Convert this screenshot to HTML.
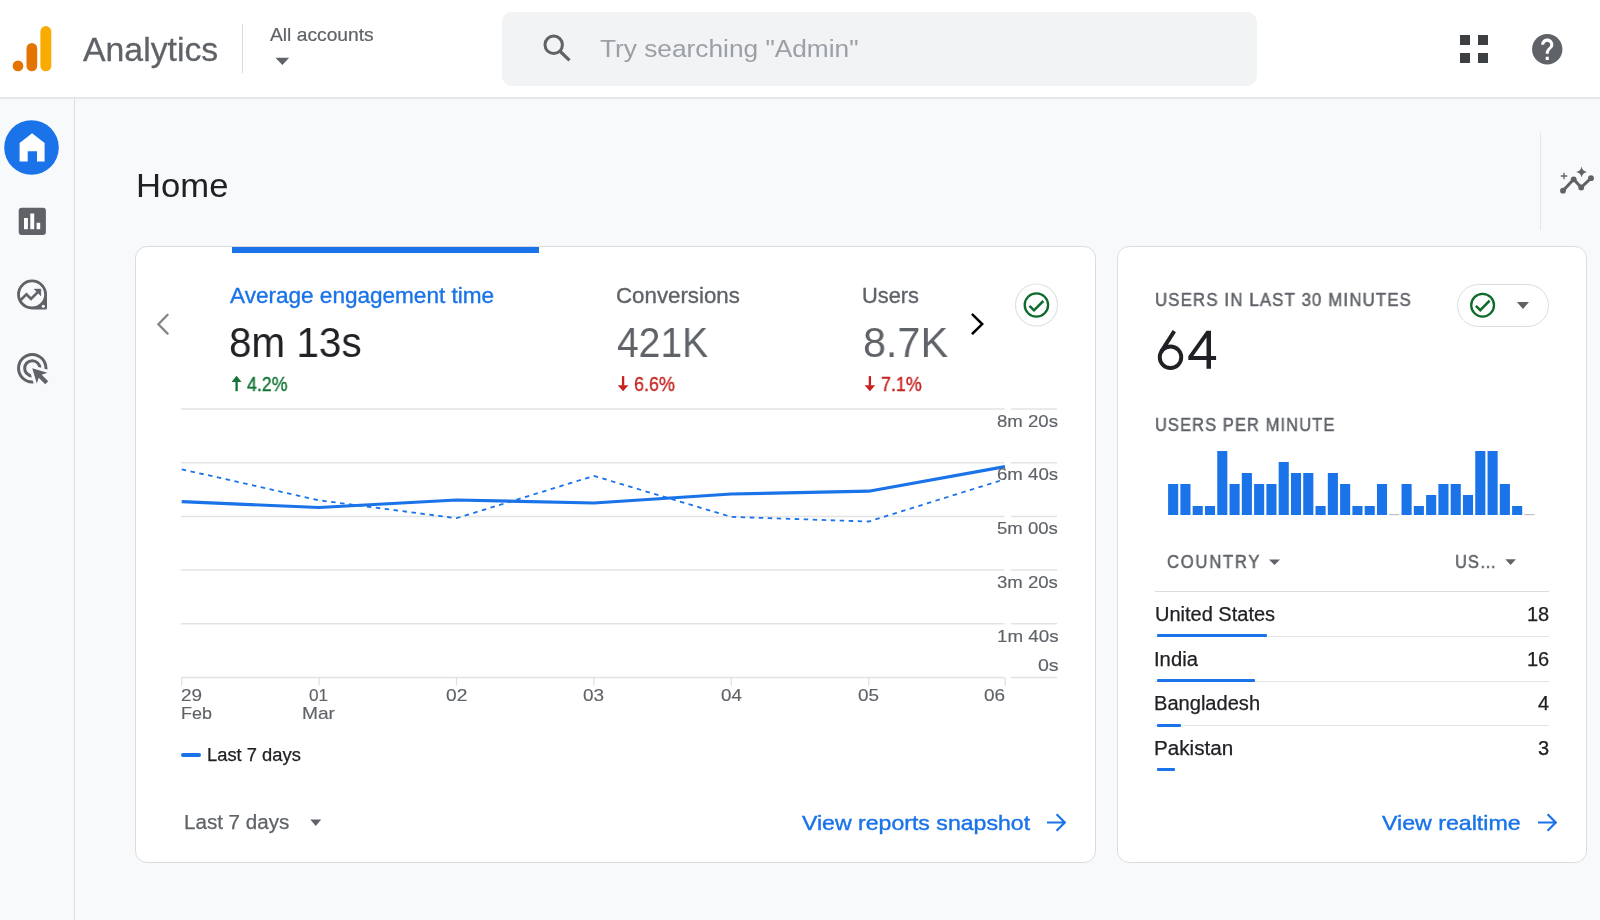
<!DOCTYPE html>
<html><head><meta charset="utf-8"><title>Analytics Home</title>
<style>
html,body{margin:0;padding:0;}
body{width:1600px;height:920px;overflow:hidden;position:relative;background:#f8f9fa;font-family:"Liberation Sans",sans-serif;}
.t{position:absolute;white-space:nowrap;transform-origin:0 50%;will-change:transform;}
.r{position:absolute;}
</style></head><body>
<div class="r" style="left:0px;top:0px;width:1600px;height:97px;background:#fff;"></div>
<div class="r" style="left:0px;top:97px;width:1600px;height:2px;background:#e6e7e9;"></div>
<svg class="r" style="left:0;top:0" width="80" height="97" viewBox="0 0 80 97"><rect x="40.4" y="26.1" width="10.9" height="45.2" rx="5.45" fill="#F9AB00"/><rect x="26.5" y="43" width="10.7" height="28.3" rx="5.35" fill="#E37400"/><circle cx="18" cy="65.9" r="5.35" fill="#E37400"/></svg>
<div class="t" style="left:83.00px;top:31px;font-size:33.5px;line-height:37px;color:#5f6368;transform:scaleX(1.0088);-webkit-text-stroke:0.3px #5f6368;">Analytics</div>
<div class="r" style="left:242px;top:24px;width:1px;height:49px;background:#dadce0;"></div>
<div class="t" style="left:269.50px;top:24px;font-size:19px;line-height:21px;color:#5f6368;transform:scaleX(1.0123);-webkit-text-stroke:0.2px #5f6368;">All accounts</div>
<svg class="r" style="left:275px;top:57px" width="15" height="9" viewBox="0 0 15 9"><path d="M0.5 0.8h13.7L7.35 8z" fill="#5f6368"/></svg>
<div class="r" style="left:502px;top:12px;width:755px;height:74px;background:#f1f3f4;border-radius:10px;"></div>
<svg class="r" style="left:538px;top:30px" width="38" height="38" viewBox="0 0 38 38"><circle cx="15.7" cy="14.8" r="8.7" fill="none" stroke="#5f6368" stroke-width="3"/><path d="M21.8 21 L31.5 30.4" stroke="#5f6368" stroke-width="3.2"/></svg>
<div class="t" style="left:600.47px;top:35px;font-size:24.8px;line-height:27px;color:#9aa0a6;transform:scaleX(1.0591);">Try searching "Admin"</div>
<div class="r" style="left:1460px;top:35px;width:10px;height:10px;background:#3c4043;"></div>
<div class="r" style="left:1460px;top:52.6px;width:10px;height:10px;background:#3c4043;"></div>
<div class="r" style="left:1477.7px;top:35px;width:10px;height:10px;background:#3c4043;"></div>
<div class="r" style="left:1477.7px;top:52.6px;width:10px;height:10px;background:#3c4043;"></div>
<svg class="r" style="left:1529px;top:30.6px" width="36.5" height="36.5" viewBox="0 0 24 24"><path fill="#5f6368" d="M12 2C6.48 2 2 6.48 2 12s4.48 10 10 10 10-4.48 10-10S17.52 2 12 2zm1 17h-2v-2h2v2zm2.07-7.75l-.9.92C13.45 12.9 13 13.5 13 15h-2v-.5c0-1.1.45-2.1 1.17-2.83l1.24-1.26c.37-.36.59-.86.59-1.41 0-1.1-.9-2-2-2s-2 .9-2 2H8c0-2.21 1.79-4 4-4s4 1.79 4 4c0 .88-.36 1.68-.93 2.25z"/></svg>
<div class="r" style="left:74px;top:99px;width:1px;height:821px;background:#dcdee1;"></div>
<svg class="r" style="left:0;top:98px" width="74" height="300" viewBox="0 98 74 300"><circle cx="31.5" cy="147.5" r="27.3" fill="#1a73e8"/><path d="M19.6 143 L32.1 133.3 L44.6 143 V161.5 H37 V151.2 H27.7 V161.5 H19.6 Z" fill="#fff"/><rect x="18.7" y="207.7" width="27.2" height="27.3" rx="3" fill="#5f6368"/><rect x="24" y="218" width="3.9" height="11.2" fill="#fff"/><rect x="30.3" y="213.5" width="3.9" height="15.7" fill="#fff"/><rect x="36.6" y="222.8" width="3.6" height="6.4" fill="#fff"/></svg>
<svg class="r" style="left:0;top:260px" width="74" height="60" viewBox="0 260 74 60"><path fill-rule="evenodd" fill="#5f6368" d="M32.05 279.5 A14.95 14.95 0 0 0 17.1 294.45 A14.95 14.95 0 0 0 32.05 309.4 H45.5 Q47 309.4 47 307.9 V294.45 A14.95 14.95 0 0 0 32.05 279.5 Z M32.05 282.35 A12.1 12.1 0 1 0 32.05 306.55 A12.1 12.1 0 1 0 32.05 282.35 Z"/><clipPath id="exc"><circle cx="32.05" cy="294.45" r="13"/></clipPath><g clip-path="url(#exc)"><g transform="translate(15.6 282.1) scale(1.15)"><path fill="#5f6368" stroke="#5f6368" stroke-width="0.35" d="M16 6l2.29 2.29-4.88 4.88-4-4L2 16.59 3.41 18l6-6 4 4 6.3-6.29L22 12V6z"/></g></g><circle cx="43.3" cy="306.3" r="1.5" fill="#fff"/></svg>
<svg class="r" style="left:14px;top:350.2px" width="36.5" height="36.5" viewBox="0 -960 960 960"><path fill="#5f6368" d="M468-240q-96-5-162-74t-66-166q0-100 70-170t170-70q97 0 166 66t74 163l-84-25q-13-54-56-89t-100-35q-66 0-113 47t-47 113q0 57 35 100t89 56l24 84Zm48 158q-9 2-18 2h-18q-83 0-156-31.5T197-197q-54-54-85.5-127T80-480q0-83 31.5-156T197-763q54-54 127-85.5T480-880q83 0 156 31.5T763-763q54 54 85.5 127T880-480v18q0 9-2 18l-78-24v-12q0-134-93-227t-227-93q-134 0-227 93t-93 227q0 134 93 227t227 93h12l24 78Zm305 22L650-231 600-80 480-480l400 120-151 50 171 171-79 79Z"/></svg>
<div class="t" style="left:136.13px;top:166px;font-size:34px;line-height:38px;color:#202124;transform:scaleX(1.0190);">Home</div>
<div class="r" style="left:1540px;top:133px;width:1px;height:97px;background:#e3e5e8;"></div>
<svg class="r" style="left:1550px;top:160px" width="50" height="45" viewBox="1550 160 50 45"><path d="M1563 190.7 L1573.7 179.3 L1581.2 187.5 L1591 178.2" fill="none" stroke="#5f6368" stroke-width="3" stroke-linejoin="round"/><circle cx="1563" cy="190.7" r="2.9" fill="#5f6368"/><circle cx="1573.7" cy="179.3" r="2.9" fill="#5f6368"/><circle cx="1581.2" cy="187.5" r="2.9" fill="#5f6368"/><circle cx="1591" cy="178.2" r="2.9" fill="#5f6368"/><path d="M1581.6 166.5 Q1582.4 171.2 1587 172 Q1582.4 172.8 1581.6 177.5 Q1580.8 172.8 1576.2 172 Q1580.8 171.2 1581.6 166.5Z" fill="#5f6368"/><path d="M1564 172.8 V179.2 M1560.8 176 H1567.2" stroke="#5f6368" stroke-width="1.3"/></svg>
<div class="r" style="left:135px;top:246px;width:961px;height:617px;background:#fff;box-sizing:border-box;border:1px solid #dadce0;border-radius:12px;"></div>
<div class="r" style="left:231.9px;top:247px;width:307.1px;height:6px;background:#1a73e8;"></div>
<svg class="r" style="left:140px;top:300px" width="880" height="45" viewBox="140 300 880 45"><polyline points="167.6,314.8 158.4,324.2 167.6,333.6" fill="none" stroke="#80868b" stroke-width="2.3" stroke-linecap="round"/><polyline points="972.6,314.7 982.2,324.1 972.6,333.5" fill="none" stroke="#000" stroke-width="2.5" stroke-linecap="round"/></svg>
<div class="t" style="left:229.60px;top:284px;font-size:21.5px;line-height:24px;color:#1a73e8;transform:scaleX(1.0487);-webkit-text-stroke:0.35px #1a73e8;">Average engagement time</div>
<div class="t" style="left:228.68px;top:319px;font-size:42px;line-height:47px;color:#202124;transform:scaleX(0.9635);">8m 13s</div>
<div class="t" style="left:615.89px;top:284px;font-size:21.5px;line-height:24px;color:#5f6368;transform:scaleX(1.0364);-webkit-text-stroke:0.35px #5f6368;">Conversions</div>
<div class="t" style="left:617.02px;top:319px;font-size:42px;line-height:47px;color:#5f6368;transform:scaleX(0.9297);">421K</div>
<div class="t" style="left:861.86px;top:284px;font-size:21.5px;line-height:24px;color:#5f6368;transform:scaleX(1.0158);-webkit-text-stroke:0.35px #5f6368;">Users</div>
<div class="t" style="left:862.54px;top:319px;font-size:42px;line-height:47px;color:#5f6368;transform:scaleX(0.9833);">8.7K</div>
<svg class="r" style="left:0;top:0" width="1000" height="400" viewBox="0 0 1000 400"><path d="M231.6 381.9 L236.55 375.7 L241.5 381.9 Z" fill="#137333"/><rect x="235.45" y="381" width="2.3" height="10.2" fill="#137333"/><path d="M617.8 385.3 L623.1 391.2 L628.4 385.3 Z" fill="#c5221f"/><rect x="621.95" y="376.1" width="2.3" height="9.5" fill="#c5221f"/><path d="M864.6 385.3 L869.9 391.2 L875.2 385.3 Z" fill="#c5221f"/><rect x="868.75" y="376.1" width="2.3" height="9.5" fill="#c5221f"/></svg>
<div class="t" style="left:247.14px;top:374px;font-size:19.3px;line-height:21px;color:#137333;transform:scaleX(0.9222);-webkit-text-stroke:0.35px #137333;">4.2%</div>
<div class="t" style="left:634.30px;top:374px;font-size:19.3px;line-height:21px;color:#c5221f;transform:scaleX(0.9324);-webkit-text-stroke:0.35px #c5221f;">6.6%</div>
<div class="t" style="left:881.00px;top:374px;font-size:19.3px;line-height:21px;color:#c5221f;transform:scaleX(0.9289);-webkit-text-stroke:0.35px #c5221f;">7.1%</div>
<svg class="r" style="left:1013px;top:282px" width="47" height="47" viewBox="1013 282 47 47"><circle cx="1036.5" cy="305" r="21" fill="#fff" stroke="#e0e1e3" stroke-width="1.2"/><circle cx="1036.4" cy="305" r="11.7" fill="none" stroke="#0d6b2c" stroke-width="2.3"/><path d="M1029.5 305.8 L1034 310.3 L1043.3 301" fill="none" stroke="#0d6b2c" stroke-width="2.5"/></svg>
<svg class="r" style="left:0;top:0" width="1600" height="920" viewBox="0 0 1600 920"><path d="M181 409.00H1004.5M1011 409.00H1057" stroke="#e2e3e5" stroke-width="1.5" fill="none"/><path d="M181 462.70H1004.5M1011 462.70H1057" stroke="#e2e3e5" stroke-width="1.5" fill="none"/><path d="M181 516.40H1004.5M1011 516.40H1057" stroke="#e2e3e5" stroke-width="1.5" fill="none"/><path d="M181 570.10H1004.5M1011 570.10H1057" stroke="#e2e3e5" stroke-width="1.5" fill="none"/><path d="M181 623.80H1004.5M1011 623.80H1057" stroke="#e2e3e5" stroke-width="1.5" fill="none"/><path d="M181 677.50H1004.5M1011 677.50H1057" stroke="#e2e3e5" stroke-width="1.5" fill="none"/><path d="M181.70 677.5V685.5" stroke="#dfe1e3" stroke-width="1.3"/><path d="M319.10 677.5V685.5" stroke="#dfe1e3" stroke-width="1.3"/><path d="M456.50 677.5V685.5" stroke="#dfe1e3" stroke-width="1.3"/><path d="M593.90 677.5V685.5" stroke="#dfe1e3" stroke-width="1.3"/><path d="M731.30 677.5V685.5" stroke="#dfe1e3" stroke-width="1.3"/><path d="M868.70 677.5V685.5" stroke="#dfe1e3" stroke-width="1.3"/><path d="M1005.20 677.5V685.5" stroke="#dfe1e3" stroke-width="1.3"/><polyline points="181.7,469.3 319.1,500.3 456.5,518.2 593.9,475.9 731.3,516.9 868.7,521.5 1005,479.2" fill="none" stroke="#1a73e8" stroke-width="1.8" stroke-dasharray="4.5 4.5"/><polyline points="181.7,501.7 319.1,507.5 456.5,500 593.9,503 731.3,494 868.7,491.2 1005,466.6" fill="none" stroke="#1a73e8" stroke-width="3.2" stroke-linejoin="round"/></svg>
<div class="t" style="left:997.16px;top:412px;font-size:17px;line-height:19px;color:#5f6368;transform:scaleX(1.0937);-webkit-text-stroke:0.15px #5f6368;">8m 20s</div>
<div class="t" style="left:997.07px;top:465px;font-size:17px;line-height:19px;color:#5f6368;transform:scaleX(1.0955);-webkit-text-stroke:0.15px #5f6368;">6m 40s</div>
<div class="t" style="left:997.26px;top:519px;font-size:17px;line-height:19px;color:#5f6368;transform:scaleX(1.0920);-webkit-text-stroke:0.15px #5f6368;">5m 00s</div>
<div class="t" style="left:997.26px;top:573px;font-size:17px;line-height:19px;color:#5f6368;transform:scaleX(1.0920);-webkit-text-stroke:0.15px #5f6368;">3m 20s</div>
<div class="t" style="left:996.59px;top:627px;font-size:17px;line-height:19px;color:#5f6368;transform:scaleX(1.1041);-webkit-text-stroke:0.15px #5f6368;">1m 40s</div>
<div class="t" style="left:1037.55px;top:656px;font-size:17px;line-height:19px;color:#5f6368;transform:scaleX(1.1502);-webkit-text-stroke:0.15px #5f6368;">0s</div>
<div class="t" style="left:181.15px;top:686px;font-size:17px;line-height:19px;color:#5f6368;transform:scaleX(1.1127);-webkit-text-stroke:0.15px #5f6368;">29</div>
<div class="t" style="left:180.87px;top:704px;font-size:17px;line-height:19px;color:#5f6368;transform:scaleX(1.0551);-webkit-text-stroke:0.15px #5f6368;">Feb</div>
<div class="t" style="left:308.61px;top:686px;font-size:17px;line-height:19px;color:#5f6368;transform:scaleX(1.0100);-webkit-text-stroke:0.15px #5f6368;">01</div>
<div class="t" style="left:302.07px;top:704px;font-size:17px;line-height:19px;color:#5f6368;transform:scaleX(1.1258);-webkit-text-stroke:0.15px #5f6368;">Mar</div>
<div class="t" style="left:445.99px;top:686px;font-size:17px;line-height:19px;color:#5f6368;transform:scaleX(1.1246);-webkit-text-stroke:0.15px #5f6368;">02</div>
<div class="t" style="left:583.39px;top:686px;font-size:17px;line-height:19px;color:#5f6368;transform:scaleX(1.1136);-webkit-text-stroke:0.15px #5f6368;">03</div>
<div class="t" style="left:720.60px;top:686px;font-size:17px;line-height:19px;color:#5f6368;transform:scaleX(1.1029);-webkit-text-stroke:0.15px #5f6368;">04</div>
<div class="t" style="left:857.89px;top:686px;font-size:17px;line-height:19px;color:#5f6368;transform:scaleX(1.1136);-webkit-text-stroke:0.15px #5f6368;">05</div>
<div class="t" style="left:984.24px;top:686px;font-size:17px;line-height:19px;color:#5f6368;transform:scaleX(1.1136);-webkit-text-stroke:0.15px #5f6368;">06</div>
<div class="r" style="left:180.8px;top:753.3px;width:20.3px;height:4px;background:#1a73e8;border-radius:2px;"></div>
<div class="t" style="left:206.53px;top:745px;font-size:18px;line-height:20px;color:#202124;transform:scaleX(1.0189);-webkit-text-stroke:0.25px #202124;">Last 7 days</div>
<div class="t" style="left:184.45px;top:811px;font-size:20px;line-height:22px;color:#5f6368;transform:scaleX(1.0290);-webkit-text-stroke:0.25px #5f6368;">Last 7 days</div>
<svg class="r" style="left:309px;top:818px" width="14" height="10" viewBox="0 0 14 10"><path d="M1.3 1.5h10.9L6.75 8z" fill="#5f6368"/></svg>
<div class="t" style="left:801.68px;top:811px;font-size:21px;line-height:23px;color:#1a73e8;transform:scaleX(1.0996);-webkit-text-stroke:0.4px #1a73e8;">View reports snapshot</div>
<svg class="r" style="left:1045px;top:812px" width="22" height="21" viewBox="0 0 22 21"><path d="M2 10.5H19.5 M11.6 2.2 L19.8 10.5 L11.6 18.8" fill="none" stroke="#1a73e8" stroke-width="2.2"/></svg>
<div class="r" style="left:1117px;top:246px;width:470px;height:617px;background:#fff;box-sizing:border-box;border:1px solid #dadce0;border-radius:12px;"></div>
<div class="t" style="left:1154.59px;top:290px;font-size:17.5px;line-height:20px;color:#5f6368;letter-spacing:1.2px;transform:scaleX(0.9600);-webkit-text-stroke:0.5px #5f6368;">USERS IN LAST 30 MINUTES</div>
<svg class="r" style="left:1150px;top:320px" width="80" height="55" viewBox="1150 320 80 55"><circle cx="1170.5" cy="357.2" r="10.75" fill="none" stroke="#202124" stroke-width="3.9"/><path d="M1174.3 331.1 L1161.2 351.6" fill="none" stroke="#202124" stroke-width="3.9"/><path fill-rule="evenodd" fill="#202124" d="M1206.5 330.8 H1211 V355.9 H1216.1 V360.1 H1211 V368.7 H1206.5 V360.1 H1188.3 V356.2 Z M1206.5 337.5 V355.9 H1193.3 Z"/></svg>
<div class="r" style="left:1457px;top:284px;width:92px;height:43px;background:#fff;box-sizing:border-box;border:1px solid #dadce0;border-radius:22px;"></div>
<svg class="r" style="left:1465px;top:288px" width="70" height="35" viewBox="1465 288 70 35"><circle cx="1482.6" cy="305.2" r="11.4" fill="none" stroke="#0d6b2c" stroke-width="2.3"/><path d="M1475.9 305.9 L1480.3 310.2 L1489.6 300.7" fill="none" stroke="#0d6b2c" stroke-width="2.5"/><path d="M1516.9 302h12.1L1523 309z" fill="#5f6368"/></svg>
<div class="t" style="left:1154.67px;top:415px;font-size:17.5px;line-height:20px;color:#5f6368;letter-spacing:1.2px;transform:scaleX(0.9383);-webkit-text-stroke:0.5px #5f6368;">USERS PER MINUTE</div>
<svg class="r" style="left:1160px;top:440px" width="390" height="80" viewBox="1160 440 390 80"><rect x="1168.10" y="484" width="10.1" height="31" fill="#1a73e8"/><rect x="1180.39" y="484" width="10.1" height="31" fill="#1a73e8"/><rect x="1192.67" y="506" width="10.1" height="9" fill="#1a73e8"/><rect x="1204.96" y="506" width="10.1" height="9" fill="#1a73e8"/><rect x="1217.24" y="451" width="10.1" height="64" fill="#1a73e8"/><rect x="1229.53" y="484" width="10.1" height="31" fill="#1a73e8"/><rect x="1241.82" y="473" width="10.1" height="42" fill="#1a73e8"/><rect x="1254.10" y="484" width="10.1" height="31" fill="#1a73e8"/><rect x="1266.39" y="484" width="10.1" height="31" fill="#1a73e8"/><rect x="1278.67" y="462" width="10.1" height="53" fill="#1a73e8"/><rect x="1290.96" y="473" width="10.1" height="42" fill="#1a73e8"/><rect x="1303.25" y="473" width="10.1" height="42" fill="#1a73e8"/><rect x="1315.53" y="506" width="10.1" height="9" fill="#1a73e8"/><rect x="1327.82" y="473" width="10.1" height="42" fill="#1a73e8"/><rect x="1340.10" y="484" width="10.1" height="31" fill="#1a73e8"/><rect x="1352.39" y="506" width="10.1" height="9" fill="#1a73e8"/><rect x="1364.68" y="506" width="10.1" height="9" fill="#1a73e8"/><rect x="1376.96" y="484" width="10.1" height="31" fill="#1a73e8"/><rect x="1389.25" y="514" width="10.1" height="1.2" fill="#bdc1c6"/><rect x="1401.53" y="484" width="10.1" height="31" fill="#1a73e8"/><rect x="1413.82" y="506" width="10.1" height="9" fill="#1a73e8"/><rect x="1426.11" y="495" width="10.1" height="20" fill="#1a73e8"/><rect x="1438.39" y="484" width="10.1" height="31" fill="#1a73e8"/><rect x="1450.68" y="484" width="10.1" height="31" fill="#1a73e8"/><rect x="1462.96" y="495" width="10.1" height="20" fill="#1a73e8"/><rect x="1475.25" y="451" width="10.1" height="64" fill="#1a73e8"/><rect x="1487.54" y="451" width="10.1" height="64" fill="#1a73e8"/><rect x="1499.82" y="484" width="10.1" height="31" fill="#1a73e8"/><rect x="1512.11" y="506" width="10.1" height="9" fill="#1a73e8"/><rect x="1524.39" y="514" width="10.1" height="1.2" fill="#bdc1c6"/></svg>
<div class="t" style="left:1166.91px;top:552px;font-size:18px;line-height:20px;color:#5f6368;letter-spacing:1.8px;transform:scaleX(0.9293);-webkit-text-stroke:0.5px #5f6368;">COUNTRY</div>
<svg class="r" style="left:1268px;top:558px" width="14" height="9" viewBox="0 0 14 9"><path d="M1 1.4h11L6.5 7z" fill="#5f6368"/></svg>
<div class="t" style="left:1454.66px;top:552px;font-size:18px;line-height:20px;color:#5f6368;letter-spacing:1.0px;transform:scaleX(0.9166);-webkit-text-stroke:0.5px #5f6368;">US…</div>
<svg class="r" style="left:1504px;top:558px" width="14" height="9" viewBox="0 0 14 9"><path d="M1.3 1.3h10.6L6.6 7z" fill="#5f6368"/></svg>
<div class="r" style="left:1155px;top:591px;width:394px;height:1px;background:#dadce0;"></div>
<div class="t" style="left:1154.50px;top:603px;font-size:20px;line-height:22px;color:#202124;-webkit-text-stroke:0.25px #202124;">United States</div>
<div class="t" style="left:1526.90px;top:603px;font-size:20px;line-height:22px;color:#202124;-webkit-text-stroke:0.25px #202124;">18</div>
<div class="r" style="left:1155px;top:636px;width:394px;height:1px;background:#e3e5e8;"></div>
<div class="r" style="left:1156.5px;top:634px;width:110.7px;height:3px;background:#1a73e8;border-radius:1px;"></div>
<div class="t" style="left:1154.18px;top:648px;font-size:20px;line-height:22px;color:#202124;transform:scaleX(1.0120);-webkit-text-stroke:0.25px #202124;">India</div>
<div class="t" style="left:1526.90px;top:648px;font-size:20px;line-height:22px;color:#202124;-webkit-text-stroke:0.25px #202124;">16</div>
<div class="r" style="left:1155px;top:681px;width:394px;height:1px;background:#e3e5e8;"></div>
<div class="r" style="left:1156.5px;top:679px;width:98.4px;height:3px;background:#1a73e8;border-radius:1px;"></div>
<div class="t" style="left:1154.39px;top:692px;font-size:20px;line-height:22px;color:#202124;transform:scaleX(1.0039);-webkit-text-stroke:0.25px #202124;">Bangladesh</div>
<div class="t" style="left:1537.80px;top:692px;font-size:20px;line-height:22px;color:#202124;-webkit-text-stroke:0.25px #202124;">4</div>
<div class="r" style="left:1155px;top:725px;width:394px;height:1px;background:#e3e5e8;"></div>
<div class="r" style="left:1156.5px;top:724px;width:24.6px;height:3px;background:#1a73e8;border-radius:1px;"></div>
<div class="t" style="left:1154.35px;top:737px;font-size:20px;line-height:22px;color:#202124;transform:scaleX(1.0325);-webkit-text-stroke:0.25px #202124;">Pakistan</div>
<div class="t" style="left:1538.00px;top:737px;font-size:20px;line-height:22px;color:#202124;-webkit-text-stroke:0.25px #202124;">3</div>
<div class="r" style="left:1156.5px;top:768px;width:18.5px;height:3px;background:#1a73e8;border-radius:1px;"></div>
<div class="t" style="left:1382.38px;top:811px;font-size:21px;line-height:23px;color:#1a73e8;transform:scaleX(1.1032);-webkit-text-stroke:0.4px #1a73e8;">View realtime</div>
<svg class="r" style="left:1536px;top:812px" width="22" height="21" viewBox="0 0 22 21"><path d="M2 10.5H19.5 M11.6 2.2 L19.8 10.5 L11.6 18.8" fill="none" stroke="#1a73e8" stroke-width="2.2"/></svg>
</body></html>
